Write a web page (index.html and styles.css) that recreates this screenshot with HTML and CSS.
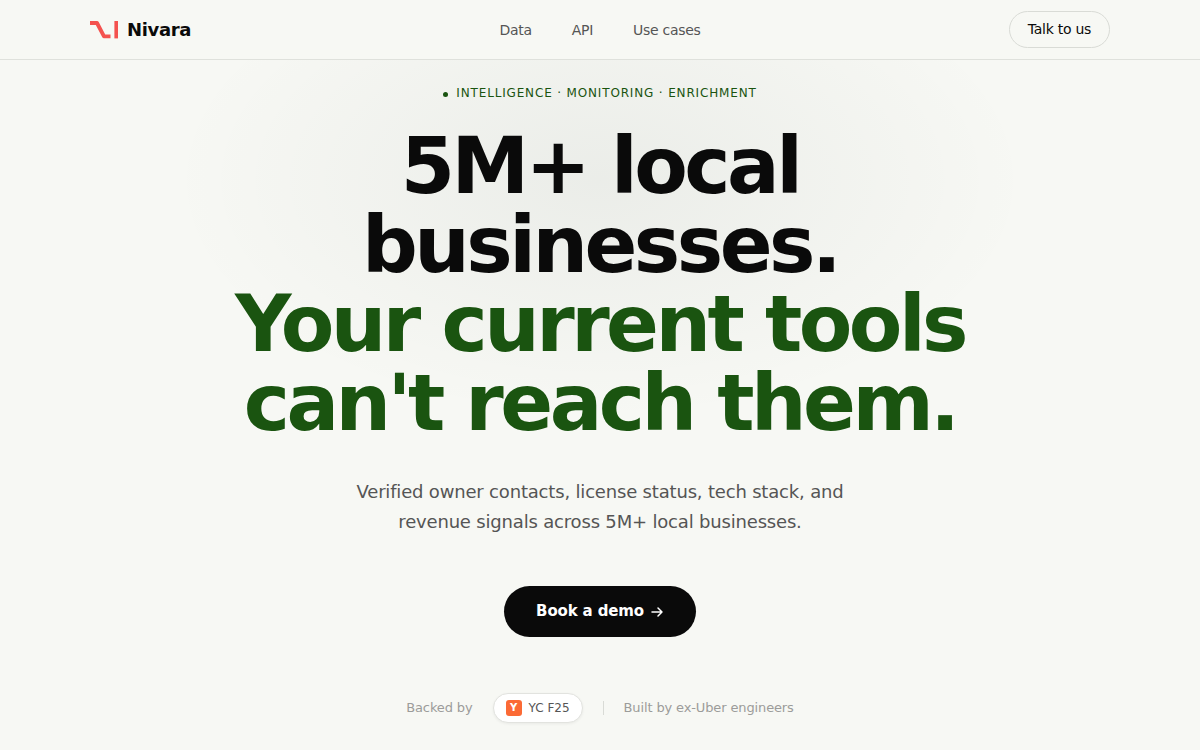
FILE: index.html
```
<!DOCTYPE html>
<html lang="en">
<head>
<meta charset="UTF-8" />
<meta name="viewport" content="width=device-width, initial-scale=1" />
<title>Nivara</title>
<link rel="stylesheet" href="styles.css">
</head>
<body>
  <header class="nav">
    <div class="nav-inner">
      <a href="#" class="brand">
        <svg class="brand-mark" viewBox="0 0 28 18" aria-hidden="true">
          <path d="M0 2H7L14 15.4H20.5" fill="none" stroke="#f4524f" stroke-width="3.9" stroke-linejoin="round" />
          <rect x="24.4" y="0" width="3.6" height="17.4" fill="#f4524f" />
        </svg>
        <span>Nivara</span>
      </a>
      <nav class="nav-links">
        <a href="#data">Data</a>
        <a href="#api">API</a>
        <a href="#use-cases">Use cases</a>
      </nav>
      <div class="nav-action">
        <a href="#contact" class="btn-outline">Talk to us</a>
      </div>
    </div>
  </header>

  <main class="hero">
    <p class="eyebrow"><span class="dot"></span>Intelligence · Monitoring · Enrichment</p>
    <h1>5M+ local businesses.<br><span class="accent">Your current tools can't reach them.</span></h1>
    <p class="subtitle">Verified owner contacts, license status, tech stack, and revenue signals across 5M+ local businesses.</p>
    <a href="#demo" class="btn-primary">
      Book a demo
      <svg class="arrow" viewBox="0 0 14 14" aria-hidden="true">
        <path d="M2 7H12M8 3L12 7L8 11" fill="none" stroke="currentColor" stroke-width="1.5" stroke-linecap="round" stroke-linejoin="round" />
      </svg>
    </a>
    <div class="proof">
      <span>Backed by</span>
      <span class="badge"><span class="yc">Y</span>YC F25</span>
      <span class="divider"></span>
      <span>Built by ex-Uber engineers</span>
    </div>
  </main>
</body>
</html>
```

FILE: styles.css
```
* {
  box-sizing: border-box;
}
body {
  margin: 0;
  background: #f7f8f4;
  color: #0a0a0a;
  font-family: "DejaVu Sans", sans-serif;
}
a {
  color: inherit;
  text-decoration: none;
}
.nav {
  background: #f7f8f4;
  border-bottom: 1px solid #dfe1dc;
}
.nav-inner {
  display: grid;
  grid-template-columns: 1fr auto 1fr;
  align-items: center;
  max-width: 1100px;
  height: 59px;
  margin: 0 auto;
  padding: 0 40px;
}
.brand {
  display: flex;
  align-items: center;
  gap: 9px;
  font-size: 18px;
  font-weight: bold;
  letter-spacing: -0.02em;
}
.brand-mark {
  width: 28px;
  height: 18px;
}
.nav-links {
  display: flex;
  gap: 40px;
  font-size: 14px;
  letter-spacing: -0.02em;
  color: #555;
}
.nav-action {
  display: flex;
  justify-content: flex-end;
}
.btn-outline {
  padding: 9px 18px;
  border: 1px solid #d9dbd6;
  border-radius: 100px;
  font-size: 14px;
  line-height: 17px;
  letter-spacing: -0.02em;
}
.hero {
  display: flex;
  flex-direction: column;
  align-items: center;
  padding: 24px 40px;
  text-align: center;
  background: radial-gradient(ellipse 430px 240px at 50% 120px, rgba(10, 30, 20, 0.05), transparent) no-repeat;
}
.eyebrow {
  display: flex;
  align-items: center;
  gap: 8px;
  margin: 0 0 25px;
  font-size: 12px;
  line-height: 18px;
  letter-spacing: 0.07em;
  text-transform: uppercase;
  color: #1a5410;
}
.dot {
  width: 5px;
  height: 5px;
  margin-top: 2px;
  border-radius: 50%;
  background: #1a5410;
}
h1 {
  max-width: 820px;
  margin: 0 0 34px;
  font-size: 78px;
  line-height: 79px;
  letter-spacing: -0.045em;
}
.accent {
  color: #1a5410;
}
.subtitle {
  max-width: 520px;
  margin: 0 0 49px;
  font-size: 18px;
  line-height: 30px;
  letter-spacing: -0.01em;
  color: #555;
}
.btn-primary {
  display: flex;
  align-items: center;
  gap: 6px;
  padding: 16px 32px;
  border-radius: 100px;
  background: #0a0a0a;
  color: #fff;
  font-size: 15px;
  font-weight: bold;
  line-height: 19px;
  letter-spacing: -0.01em;
}
.arrow {
  width: 14px;
  height: 14px;
}
.proof {
  display: flex;
  align-items: center;
  gap: 20px;
  margin-top: 56px;
  font-size: 13px;
  line-height: 16px;
  letter-spacing: -0.01em;
  color: #9c9c9a;
}
.badge {
  display: flex;
  align-items: center;
  gap: 7px;
  padding: 6px 12px;
  border: 1px solid #e2e3df;
  border-radius: 100px;
  background: #fff;
  box-shadow: 0 1px 3px rgba(0, 0, 0, 0.06);
  font-size: 12px;
  letter-spacing: 0;
  color: #555;
}
.yc {
  width: 16px;
  height: 16px;
  border-radius: 3px;
  background: #fb6a35;
  color: #fff;
  font-size: 10px;
  font-weight: bold;
}
.divider {
  width: 1px;
  height: 14px;
  background: #d9dbd6;
}
```
